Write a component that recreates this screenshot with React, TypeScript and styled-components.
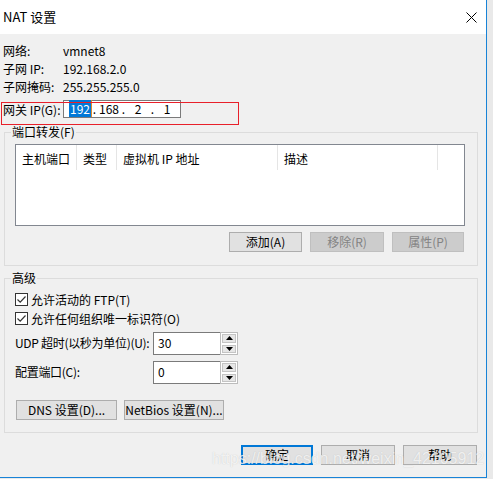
import React from "react";
import styled, { createGlobalStyle } from "styled-components";

const Global = createGlobalStyle`
  html, body { margin: 0; padding: 0; }
  body {
    background: #e9e9e9;
    font-family: "Noto Sans CJK SC", "Noto Sans", sans-serif;
    font-size: 12px;
    color: #000;
  }
  * { box-sizing: border-box; }
`;

const Window = styled.div`
  position: relative;
  width: 487px;
  height: 478px;
  display: flex;
  flex-direction: column;
  border-right: 1px solid #1883d7;
  border-bottom: 1px solid #1883d7;
  background: #f0f0f0;
  overflow: hidden;
`;

const TitleBar = styled.div`
  height: 34px;
  flex: none;
  background: #fff;
  display: flex;
  align-items: center;
  justify-content: space-between;
  padding-left: 3px;
`;

const Title = styled.div`
  font-size: 13px;
  line-height: 16px;
`;

const CloseBtn = styled.div`
  width: 30px;
  height: 34px;
  display: flex;
  align-items: center;
  justify-content: center;
`;

const Content = styled.div`
  flex: 1;
  padding: 7px 0 0 3px;
  display: flex;
  flex-direction: column;
`;

const InfoGrid = styled.div`
  display: grid;
  grid-template-columns: 60px auto;
  grid-template-rows: 19px 18px 18px;
  align-items: center;
  line-height: 16px;
`;

const GatewayRow = styled.div`
  position: relative;
  margin-top: 4px;
  height: 18px;
  display: flex;
  align-items: center;
`;

const GatewayLabel = styled.span`
  width: 60px;
  line-height: 16px;
  padding-top: 2px;
  white-space: nowrap;
`;

const IpBox = styled.div`
  width: 118px;
  height: 18px;
  border: 1px solid #7a7a7a;
  background: #fff;
  display: flex;
  align-items: center;
  padding-left: 5px;
  line-height: 14px;
`;

const IpSeg = styled.span`
  width: 22px;
  text-align: center;
`;

const IpDot = styled.span`
  width: 7px;
  text-align: center;
`;

const Selected = styled.span`
  background: #0078d7;
  color: #fff;
  padding: 0 1px;
  border-right: 1px solid #e08a2c;
`;

const Annotation = styled.div`
  position: absolute;
  left: -2px;
  top: 2px;
  width: 238px;
  height: 23px;
  border: 1px solid #e8202a;
  pointer-events: none;
`;

const GroupBox = styled.fieldset<{ $mt: number; $pb: number }>`
  margin: ${(p) => p.$mt}px 0 0 1px;
  width: 474px;
  border: 1px solid #dcdcdc;
  padding: 4px 12px ${(p) => p.$pb}px 10px;
  min-inline-size: 0;
`;

const Legend = styled.legend`
  margin-left: -4px;
  padding: 0 1px;
  line-height: 16px;
  font-size: 12px;
`;

const ListView = styled.div`
  width: 450px;
  height: 82px;
  border: 1px solid #828790;
  background: #fff;
`;

const Header = styled.div`
  display: flex;
  height: 25px;
`;

const HeaderCell = styled.div<{ $w: number }>`
  width: ${(p) => p.$w}px;
  border-right: 1px solid #e5e5e5;
  padding: 3px 0 0 6px;
  display: flex;
  align-items: center;
  line-height: 16px;
  white-space: nowrap;
`;

const ButtonRow = styled.div<{ $justify: string; $gap: number }>`
  display: flex;
  justify-content: ${(p) => p.$justify};
  gap: ${(p) => p.$gap}px;
`;

const Btn = styled.div<{ $w: number; $disabled?: boolean; $default?: boolean }>`
  width: ${(p) => p.$w}px;
  height: 20px;
  display: flex;
  align-items: center;
  justify-content: center;
  line-height: 16px;
  white-space: nowrap;
  background: ${(p) => (p.$disabled ? "#cccccc" : "#e1e1e1")};
  color: ${(p) => (p.$disabled ? "#838383" : "#000")};
  border: ${(p) =>
    p.$default ? "2px solid #0078d7" : p.$disabled ? "1px solid #bfbfbf" : "1px solid #adadad"};
`;

const ListButtons = styled(ButtonRow)`
  margin-top: 6px;
  margin-right: 1px;
`;

const CheckRow = styled.label`
  display: flex;
  align-items: center;
  height: 19px;
  gap: 3px;
  line-height: 16px;
  white-space: nowrap;
`;

const CheckBox = styled.span`
  width: 13px;
  height: 13px;
  border: 1px solid #333;
  background: #fff;
  display: flex;
  align-items: center;
  justify-content: center;
`;

const SpinRow = styled.div<{ $mt: number }>`
  display: flex;
  align-items: center;
  margin-top: ${(p) => p.$mt}px;
`;

const SpinLabel = styled.span`
  width: 138px;
  flex: none;
  line-height: 16px;
  padding-bottom: 2px;
  white-space: nowrap;
  letter-spacing: -0.3px;
`;

const SpinBox = styled.div`
  display: flex;
  height: 23px;
`;

const SpinText = styled.div`
  width: 67px;
  border: 1px solid #7a7a7a;
  border-right: none;
  background: #fff;
  padding: 2px 0 0 4px;
  line-height: 16px;
`;

const SpinButtons = styled.div`
  width: 18px;
  display: flex;
  flex-direction: column;
  border: 1px solid #bcbcbc;
  background: #fff;
`;

const SpinArrow = styled.div`
  flex: 1;
  margin: 1px;
  background: #e6e6e6;
  border: 1px solid #c4c4c4;
  display: flex;
  align-items: center;
  justify-content: center;
`;

const NetButtons = styled(ButtonRow)`
  margin-top: 16px;
  margin-left: 1px;
`;

const DialogButtons = styled(ButtonRow)`
  margin-top: 12px;
  padding-right: 9px;
`;

const Watermark = styled.div`
  position: absolute;
  left: 212px;
  top: 449px;
  font-family: "Liberation Sans", Arial, sans-serif;
  font-size: 16px;
  line-height: 20px;
  color: rgba(255, 255, 255, 0.75);
  text-shadow: 0 0 1px rgba(120, 120, 120, 0.35);
  white-space: nowrap;
  pointer-events: none;
`;

const Check = () => (
  <svg width="11" height="11" viewBox="0 0 11 11">
    <path d="M1.5 5.5 L4.2 8.2 L9.5 2.5" fill="none" stroke="#333" strokeWidth="1.2" />
  </svg>
);

const Up = () => (
  <svg width="7" height="4" viewBox="0 0 7 4">
    <path d="M0 4 L3.5 0 L7 4 Z" fill="#000" />
  </svg>
);

const Down = () => (
  <svg width="7" height="4" viewBox="0 0 7 4">
    <path d="M0 0 L3.5 4 L7 0 Z" fill="#000" />
  </svg>
);

const Spin = ({ value }: { value: string }) => (
  <SpinBox>
    <SpinText>{value}</SpinText>
    <SpinButtons>
      <SpinArrow>
        <Up />
      </SpinArrow>
      <SpinArrow>
        <Down />
      </SpinArrow>
    </SpinButtons>
  </SpinBox>
);

export default function App() {
  return (
    <>
      <Global />
      <Window>
        <TitleBar>
          <Title>NAT 设置</Title>
          <CloseBtn>
            <svg width="11" height="11" viewBox="0 0 11 11">
              <path d="M0.5 0.5 L10.5 10.5 M10.5 0.5 L0.5 10.5" stroke="#000" strokeWidth="1" />
            </svg>
          </CloseBtn>
        </TitleBar>
        <Content>
          <InfoGrid>
            <span>网络:</span>
            <span>vmnet8</span>
            <span>子网 IP:</span>
            <span>192.168.2.0</span>
            <span>子网掩码:</span>
            <span>255.255.255.0</span>
          </InfoGrid>
          <GatewayRow>
            <GatewayLabel>网关 IP(G):</GatewayLabel>
            <IpBox>
              <IpSeg>
                <Selected>192</Selected>
              </IpSeg>
              <IpDot>.</IpDot>
              <IpSeg>168</IpSeg>
              <IpDot>.</IpDot>
              <IpSeg>2</IpSeg>
              <IpDot>.</IpDot>
              <IpSeg>1</IpSeg>
            </IpBox>
            <Annotation />
          </GatewayRow>

          <GroupBox $mt={6} $pb={13}>
            <Legend>端口转发(F)</Legend>
            <ListView>
              <Header>
                <HeaderCell $w={61}>主机端口</HeaderCell>
                <HeaderCell $w={40}>类型</HeaderCell>
                <HeaderCell $w={161}>虚拟机 IP 地址</HeaderCell>
                <HeaderCell $w={160}>描述</HeaderCell>
              </Header>
            </ListView>
            <ListButtons $justify="flex-end" $gap={8}>
              <Btn $w={73}>添加(A)</Btn>
              <Btn $w={74} $disabled>
                移除(R)
              </Btn>
              <Btn $w={72} $disabled>
                属性(P)
              </Btn>
            </ListButtons>
          </GroupBox>

          <GroupBox $mt={4} $pb={12}>
            <Legend>高级</Legend>
            <CheckRow>
              <CheckBox>
                <Check />
              </CheckBox>
              允许活动的 FTP(T)
            </CheckRow>
            <CheckRow>
              <CheckBox>
                <Check />
              </CheckBox>
              允许任何组织唯一标识符(O)
            </CheckRow>
            <SpinRow $mt={4}>
              <SpinLabel>UDP 超时(以秒为单位)(U):</SpinLabel>
              <Spin value="30" />
            </SpinRow>
            <SpinRow $mt={6}>
              <SpinLabel>配置端口(C):</SpinLabel>
              <Spin value="0" />
            </SpinRow>
            <NetButtons $justify="flex-start" $gap={7}>
              <Btn $w={101}>DNS 设置(D)...</Btn>
              <Btn $w={100}>NetBios 设置(N)...</Btn>
            </NetButtons>
          </GroupBox>

          <DialogButtons $justify="flex-end" $gap={8}>
            <Btn $w={72} $default>
              确定
            </Btn>
            <Btn $w={74}>取消</Btn>
            <Btn $w={74}>帮助</Btn>
          </DialogButtons>
        </Content>
        <Watermark>https://blog.csdn.net/weixin_42105912</Watermark>
      </Window>
    </>
  );
}
